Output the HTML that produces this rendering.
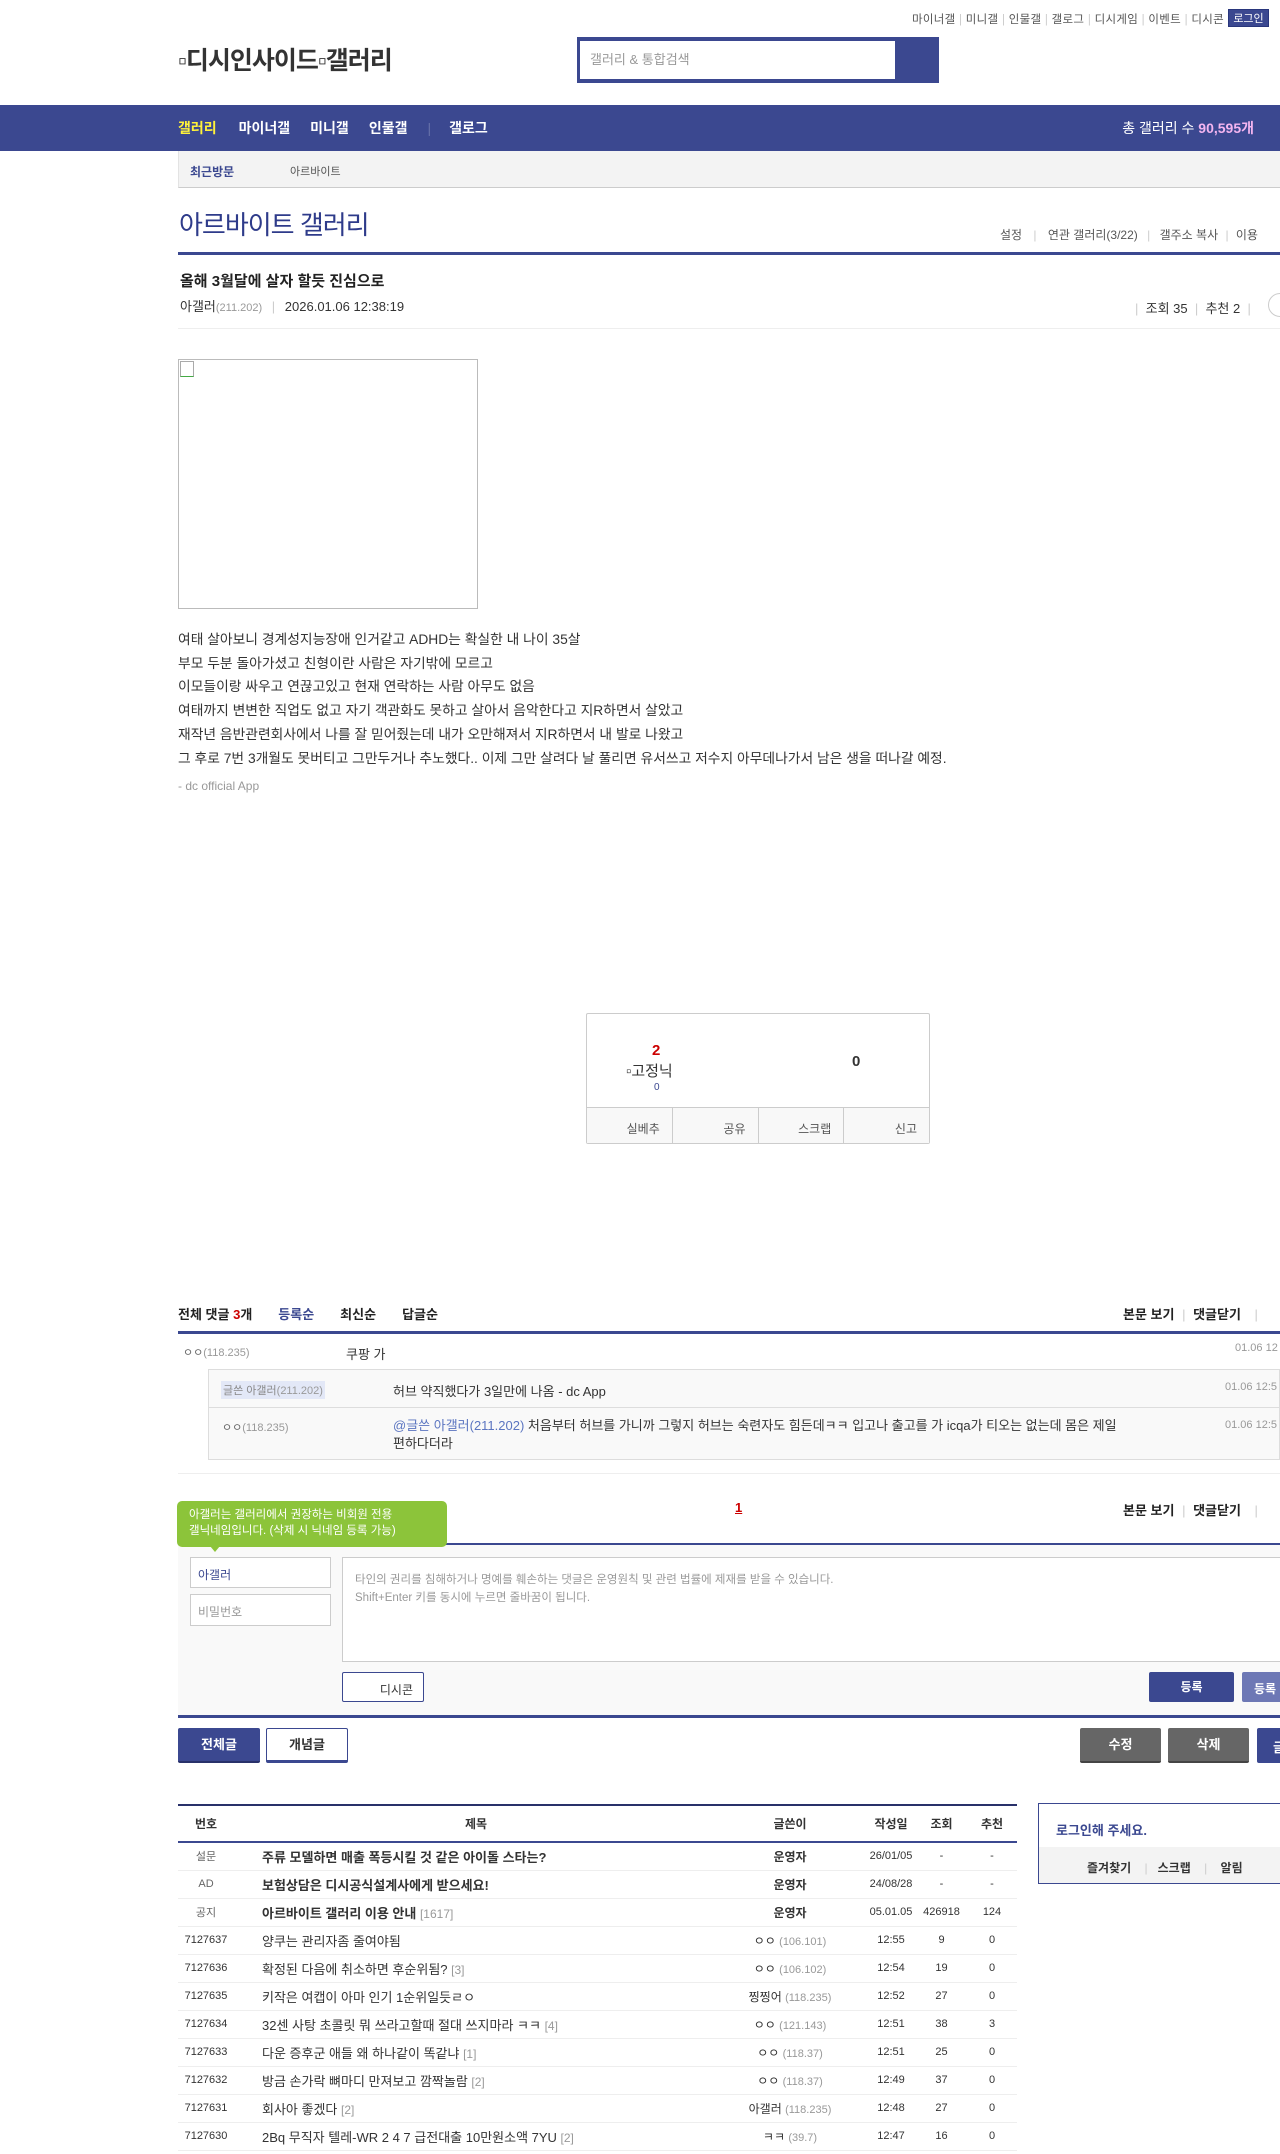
<!DOCTYPE html>
<html><head><meta charset="utf-8"><style>
*{margin:0;padding:0;box-sizing:border-box}
body{width:1280px;height:2154px;overflow:hidden;position:relative;background:#fff;font-family:"Liberation Sans","Noto Sans CJK KR",sans-serif;color:#333;font-size:13px}
.a{position:absolute;white-space:nowrap}
.nv{background:#3b4890}
.tb td{height:28px;border-bottom:1px solid #eee;font-size:12px;text-align:center;color:#333}
.tb td.t{text-align:left;padding-left:0;font-size:13px}
.tb .b{font-weight:bold}
.g{color:#999;font-size:11px}
.cnt{color:#999;font-size:12px}
</style></head><body>
<!-- top links -->
<div class="a" style="right:56px;top:11px;font-size:11.5px;color:#555;letter-spacing:0.3px">마이너갤 <span style="color:#ccc">|</span> 미니갤 <span style="color:#ccc">|</span> 인물갤 <span style="color:#ccc">|</span> 갤로그 <span style="color:#ccc">|</span> 디시게임 <span style="color:#ccc">|</span> 이벤트 <span style="color:#ccc">|</span> 디시콘</div>
<div class="a nv" style="left:1228px;top:9px;width:41px;height:18px;color:#fff;font-size:11px;text-align:center;line-height:18px;border:1px solid #29367c">로그인</div>
<!-- logo -->
<div class="a" style="left:178px;top:41px;font-size:25px;font-weight:bold;color:#333;letter-spacing:-1px">▫디시인사이드▫갤러리</div>
<!-- search -->
<div class="a nv" style="left:577px;top:37px;width:362px;height:46px"></div>
<div class="a" style="left:580px;top:41px;width:315px;height:38px;background:#fff;color:#999;font-size:13px;line-height:38px;padding-left:10px">갤러리 &amp; 통합검색</div>
<!-- nav -->
<div class="a nv" style="left:0;top:105px;width:1280px;height:46px"></div>
<div class="a" style="left:178px;top:119px;font-size:14px;font-weight:bold;color:#fff;line-height:18px"><span style="color:#fff23a">갤러리</span><span style="margin-left:22px">마이너갤</span><span style="margin-left:20px">미니갤</span><span style="margin-left:20px">인물갤</span><span style="margin-left:20px;color:#6670a8;font-weight:normal">|</span><span style="margin-left:18px">갤로그</span></div>
<div class="a" style="right:26px;top:119px;font-size:14px;color:#fff;line-height:18px">총 갤러리 수 <b style="color:#f4b5f0">90,595개</b></div>
<!-- recent -->
<div class="a" style="left:178px;top:151px;width:1102px;height:37px;background:#f3f3f3;border-bottom:1px solid #ccc;border-left:1px solid #e3e3e3"></div>
<div class="a" style="left:190px;top:163px;font-size:12px;font-weight:bold;color:#3b4890">최근방문</div>
<div class="a" style="left:290px;top:163px;font-size:11px;color:#555">아르바이트</div>
<!-- title -->
<div class="a" style="left:179px;top:205px;font-size:26px;color:#2e3b8a;letter-spacing:-1px">아르바이트 갤러리</div>
<div class="a" style="left:1000px;top:226px;font-size:12px;color:#555">설정 <span style="color:#ccc;margin:0 8px">|</span> 연관 갤러리(3/22) <span style="color:#ccc;margin:0 6px">|</span> 갤주소 복사 <span style="color:#ccc;margin:0 4px">|</span> 이용</div>
<div class="a nv" style="left:178px;top:252px;width:1102px;height:3px"></div>
<div class="a" style="left:180px;top:270px;font-size:15px;font-weight:bold;color:#222">올해 3월달에 살자 할듯 진심으로</div>
<div class="a" style="left:180px;top:296px;font-size:13px;color:#333">아갤러<span class="g">(211.202)</span> <span style="color:#ccc;margin:0 6px">|</span> 2026.01.06 12:38:19</div>
<div class="a" style="left:1135px;top:298px;font-size:13px;color:#333"><span style="color:#ccc">|</span>&nbsp; 조회 35 &nbsp;<span style="color:#ccc">|</span>&nbsp; 추천 2 &nbsp;<span style="color:#ccc">|</span></div>
<div class="a" style="left:1268px;top:293px;width:24px;height:24px;border:1px solid #ccc;border-radius:50%"></div>
<div class="a" style="left:178px;top:328px;width:1102px;height:1px;background:#eee"></div>
<!-- image -->
<div class="a" style="left:178px;top:359px;width:300px;height:250px;border:1px solid #bbb"></div>
<div class="a" style="left:180px;top:361px;width:14px;height:16px;border:1px solid #aaa;border-bottom-color:#4a4"></div>
<!-- body -->
<div class="a" style="left:178px;top:628px;font-size:13.8px;color:#333;line-height:23.7px">여태 살아보니 경계성지능장애 인거같고 ADHD는 확실한 내 나이 35살<br>부모 두분 돌아가셨고 친형이란 사람은 자기밖에 모르고<br>이모들이랑 싸우고 연끊고있고 현재 연락하는 사람 아무도 없음<br>여태까지 변변한 직업도 없고 자기 객관화도 못하고 살아서 음악한다고 지R하면서 살았고<br>재작년 음반관련회사에서 나를 잘 믿어줬는데 내가 오만해져서 지R하면서 내 발로 나왔고<br>그 후로 7번 3개월도 못버티고 그만두거나 추노했다.. 이제 그만 살려다 날 풀리면 유서쓰고 저수지 아무데나가서 남은 생을 떠나갈 예정.</div>
<div class="a" style="left:178px;top:779px;font-size:12px;color:#999">- dc official App</div>
<!-- recommend -->
<div class="a" style="left:586px;top:1013px;width:344px;height:131px;border:1px solid #ccc;border-radius:2px"></div>
<div class="a" style="left:652px;top:1042px;font-size:15px;font-weight:bold;color:#c00">2</div>
<div class="a" style="left:626px;top:1060px;font-size:15px;color:#333">▫고정닉</div>
<div class="a" style="left:654px;top:1082px;font-size:10px;color:#3b4890">0</div>
<div class="a" style="left:852px;top:1053px;font-size:15px;font-weight:bold;color:#333">0</div>
<div class="a" style="left:587px;top:1107px;width:342px;height:36px;background:#f8f8f8;border-top:1px solid #ccc;display:flex;font-size:12px;color:#555">
<div style="flex:1;border-right:1px solid #ccc;text-align:right;padding:12px 12px 0 0">실베추</div><div style="flex:1;border-right:1px solid #ccc;text-align:right;padding:12px 12px 0 0">공유</div><div style="flex:1;border-right:1px solid #ccc;text-align:right;padding:12px 12px 0 0">스크랩</div><div style="flex:1;text-align:right;padding:12px 12px 0 0">신고</div></div>
<!-- comments -->
<div class="a" style="left:178px;top:1304px;font-size:13px;font-weight:bold;color:#222">전체 댓글 <span style="color:#c00">3</span>개<span style="color:#3b4890;margin-left:26px">등록순</span><span style="margin-left:26px">최신순</span><span style="margin-left:26px">답글순</span></div>
<div class="a" style="left:1123px;top:1304px;font-size:13px;font-weight:bold;color:#222">본문 보기 <span style="color:#ccc;font-weight:normal;margin:0 4px">|</span> 댓글닫기 <span style="color:#ccc;font-weight:normal;margin-left:10px">|</span></div>
<div class="a nv" style="left:178px;top:1331px;width:1102px;height:3px"></div>
<div class="a" style="left:183px;top:1344px;font-size:11px;color:#666">ㅇㅇ<span class="g">(118.235)</span></div>
<div class="a" style="left:346px;top:1344px;font-size:13px;color:#333">쿠팡 가</div>
<div class="a" style="left:1235px;top:1342px;font-size:11px;color:#999">01.06 12</div>
<div class="a" style="left:208px;top:1369px;width:1072px;height:91px;background:#f9f9f9;border:1px solid #ddd"></div>
<div class="a" style="left:208px;top:1407px;width:1072px;height:1px;background:#ddd"></div>
<div class="a" style="left:221px;top:1381px;font-size:11px;color:#888;background:#e3e8f7;padding:1px 2px">글쓴 아갤러<span class="g">(211.202)</span></div>
<div class="a" style="left:393px;top:1381px;font-size:13px;color:#333">허브 약직했다가 3일만에 나옴 - dc App</div>
<div class="a" style="left:1225px;top:1381px;font-size:11px;color:#999">01.06 12:5</div>
<div class="a" style="left:222px;top:1419px;font-size:11px;color:#666">ㅇㅇ<span class="g">(118.235)</span></div>
<div class="a" style="left:393px;top:1417px;font-size:13px;color:#333;line-height:18px;white-space:normal;width:780px"><span style="color:#5b75c0">@글쓴 아갤러(211.202)</span> 처음부터 허브를 가니까 그렇지 허브는 숙련자도 힘든데ㅋㅋ 입고나 출고를 가 icqa가 티오는 없는데 몸은 제일<br>편하다더라</div>
<div class="a" style="left:1225px;top:1419px;font-size:11px;color:#999">01.06 12:5</div>
<div class="a" style="left:178px;top:1473px;width:1102px;height:1px;background:#eee"></div>
<div class="a" style="left:735px;top:1500px;font-size:13px;font-weight:bold;color:#c00;text-decoration:underline">1</div>
<div class="a" style="left:1123px;top:1500px;font-size:13px;font-weight:bold;color:#222">본문 보기 <span style="color:#ccc;font-weight:normal;margin:0 4px">|</span> 댓글닫기 <span style="color:#ccc;font-weight:normal;margin-left:10px">|</span></div>
<!-- write -->
<div class="a" style="left:178px;top:1543px;width:1102px;height:172px;background:#f9f9f9;border-top:2px solid #3b4890"></div>
<div class="a" style="left:177px;top:1501px;width:270px;height:46px;background:#8cc43a;border-radius:5px;color:#fff;font-size:11.5px;line-height:16px;padding:6px 0 0 12px;white-space:normal">아갤러는 갤러리에서 권장하는 비회원 전용<br>갤닉네임입니다. (삭제 시 닉네임 등록 가능)</div>
<div class="a" style="left:210px;top:1546px;width:0;height:0;border-left:5px solid transparent;border-right:5px solid transparent;border-top:6px solid #8cc43a"></div>
<div class="a" style="left:190px;top:1557px;width:141px;height:31px;background:#fff;border:1px solid #ccc;font-size:12px;color:#3b4890;padding:8px 7px">아갤러</div>
<div class="a" style="left:190px;top:1594px;width:141px;height:32px;background:#fff;border:1px solid #ccc;font-size:12px;color:#999;padding:8px 7px">비밀번호</div>
<div class="a" style="left:342px;top:1557px;width:950px;height:105px;background:#fff;border:1px solid #ccc;font-size:11.5px;color:#999;padding:13px 12px;line-height:18px">타인의 권리를 침해하거나 명예를 훼손하는 댓글은 운영원칙 및 관련 법률에 제재를 받을 수 있습니다.<br>Shift+Enter 키를 동시에 누르면 줄바꿈이 됩니다.</div>
<div class="a" style="left:342px;top:1672px;width:82px;height:30px;background:#fff;border:1px solid #3b4890;border-radius:2px;font-size:12px;color:#333;text-align:right;padding:8px 10px 0 0">디시콘</div>
<div class="a nv" style="left:1149px;top:1672px;width:85px;height:30px;border-radius:2px;color:#fff;font-size:12px;font-weight:bold;text-align:center;line-height:30px">등록</div>
<div class="a" style="left:1242px;top:1672px;width:60px;height:30px;background:#6d78b5;border-radius:2px;color:#fff;font-size:12px;font-weight:bold;padding:8px 0 0 12px">등록</div>
<div class="a nv" style="left:178px;top:1715px;width:1102px;height:3px"></div>
<!-- buttons -->
<div class="a nv" style="left:178px;top:1728px;width:82px;height:35px;border-bottom:2px solid #29316a;border-radius:2px;color:#fff;font-size:13px;font-weight:bold;text-align:center;line-height:33px">전체글</div>
<div class="a" style="left:266px;top:1728px;width:82px;height:35px;border:1px solid #3b4890;border-bottom:3px solid #3b4890;border-radius:2px;color:#333;font-size:13px;font-weight:bold;text-align:center;line-height:31px">개념글</div>
<div class="a" style="left:1080px;top:1728px;width:81px;height:35px;background:#666;border-bottom:2px solid #444;border-radius:2px;color:#fff;font-size:13px;font-weight:bold;text-align:center;line-height:33px">수정</div>
<div class="a" style="left:1168px;top:1728px;width:81px;height:35px;background:#666;border-bottom:2px solid #444;border-radius:2px;color:#fff;font-size:13px;font-weight:bold;text-align:center;line-height:33px">삭제</div>
<div class="a nv" style="left:1257px;top:1728px;width:40px;height:35px;border-radius:2px;color:#fff;font-size:13px;font-weight:bold;padding:9px 0 0 16px">글</div>
<!-- list -->
<div class="a" style="left:178px;top:1804px;width:839px">
<table class="tb" style="width:839px;border-collapse:collapse;border-top:2px solid #29316a;table-layout:fixed">
<colgroup><col style="width:84px"><col style="width:468px"><col style="width:136px"><col style="width:50px"><col style="width:51px"><col style="width:50px"></colgroup>
<tr><td style="height:37px;border-bottom:2px solid #3b4890;font-weight:bold;font-size:12px;padding-right:28px">번호</td><td style="border-bottom:2px solid #3b4890;font-weight:bold;font-size:12px;text-align:center;padding-right:40px">제목</td><td style="border-bottom:2px solid #3b4890;font-weight:bold;font-size:12px;padding-right:16px">글쓴이</td><td style="border-bottom:2px solid #3b4890;font-weight:bold;font-size:12px">작성일</td><td style="border-bottom:2px solid #3b4890;font-weight:bold;font-size:12px">조회</td><td style="border-bottom:2px solid #3b4890;font-weight:bold;font-size:12px">추천</td></tr>
<tr><td style="font-size:11px;color:#666;padding-right:28px">설문</td><td class="t b">주류 모델하면 매출 폭등시킬 것 같은 아이돌 스타는?</td><td class="b" style="padding-right:16px">운영자</td><td style="font-size:11px">26/01/05</td><td style="font-size:11px">-</td><td style="font-size:11px">-</td></tr>
<tr><td style="font-size:11px;color:#666;padding-right:28px">AD</td><td class="t b">보험상담은 디시공식설계사에게 받으세요!</td><td class="b" style="padding-right:16px">운영자</td><td style="font-size:11px">24/08/28</td><td style="font-size:11px">-</td><td style="font-size:11px">-</td></tr>
<tr><td style="font-size:11px;color:#666;padding-right:28px">공지</td><td class="t b">아르바이트 갤러리 이용 안내 <span class="cnt" style="font-weight:normal">[1617]</span></td><td class="b" style="padding-right:16px">운영자</td><td style="font-size:11px">05.01.05</td><td style="font-size:11px">426918</td><td style="font-size:11px">124</td></tr>
<tr><td style="font-size:11px;padding-right:28px">7127637</td><td class="t">양쿠는 관리자좀 줄여야됨</td><td style="padding-right:16px">ㅇㅇ <span class="g">(106.101)</span></td><td style="font-size:11px">12:55</td><td style="font-size:11px">9</td><td style="font-size:11px">0</td></tr>
<tr><td style="font-size:11px;padding-right:28px">7127636</td><td class="t">확정된 다음에 취소하면 후순위됨? <span class="cnt">[3]</span></td><td style="padding-right:16px">ㅇㅇ <span class="g">(106.102)</span></td><td style="font-size:11px">12:54</td><td style="font-size:11px">19</td><td style="font-size:11px">0</td></tr>
<tr><td style="font-size:11px;padding-right:28px">7127635</td><td class="t">키작은 여캡이 아마 인기 1순위일듯ㄹㅇ</td><td style="padding-right:16px">찡찡어 <span class="g">(118.235)</span></td><td style="font-size:11px">12:52</td><td style="font-size:11px">27</td><td style="font-size:11px">0</td></tr>
<tr><td style="font-size:11px;padding-right:28px">7127634</td><td class="t">32센 사탕 초콜릿 뭐 쓰라고할때 절대 쓰지마라 ㅋㅋ <span class="cnt">[4]</span></td><td style="padding-right:16px">ㅇㅇ <span class="g">(121.143)</span></td><td style="font-size:11px">12:51</td><td style="font-size:11px">38</td><td style="font-size:11px">3</td></tr>
<tr><td style="font-size:11px;padding-right:28px">7127633</td><td class="t">다운 증후군 애들 왜 하나같이 똑같냐 <span class="cnt">[1]</span></td><td style="padding-right:16px">ㅇㅇ <span class="g">(118.37)</span></td><td style="font-size:11px">12:51</td><td style="font-size:11px">25</td><td style="font-size:11px">0</td></tr>
<tr><td style="font-size:11px;padding-right:28px">7127632</td><td class="t">방금 손가락 뼈마디 만져보고 깜짝놀람 <span class="cnt">[2]</span></td><td style="padding-right:16px">ㅇㅇ <span class="g">(118.37)</span></td><td style="font-size:11px">12:49</td><td style="font-size:11px">37</td><td style="font-size:11px">0</td></tr>
<tr><td style="font-size:11px;padding-right:28px">7127631</td><td class="t">회사아 좋겠다 <span class="cnt">[2]</span></td><td style="padding-right:16px">아갤러 <span class="g">(118.235)</span></td><td style="font-size:11px">12:48</td><td style="font-size:11px">27</td><td style="font-size:11px">0</td></tr>
<tr><td style="font-size:11px;padding-right:28px">7127630</td><td class="t">2Bq 무직자 텔레-WR 2 4 7 급전대출 10만원소액 7YU <span class="cnt">[2]</span></td><td style="padding-right:16px">ㅋㅋ <span class="g">(39.7)</span></td><td style="font-size:11px">12:47</td><td style="font-size:11px">16</td><td style="font-size:11px">0</td></tr>
</table></div>
<!-- login box -->
<div class="a" style="left:1038px;top:1803px;width:260px;height:81px;border:1px solid #3b4890"></div>
<div class="a" style="left:1056px;top:1820px;font-size:13px;font-weight:bold;color:#3b4890">로그인해 주세요.</div>
<div class="a" style="left:1039px;top:1847px;width:260px;height:36px;background:#f3f3f3"></div>
<div class="a" style="left:1087px;top:1859px;font-size:12px;font-weight:bold;color:#333">즐겨찾기 <span style="color:#ccc;font-weight:normal;margin:0 10px">|</span>스크랩 <span style="color:#ccc;font-weight:normal;margin:0 10px">|</span> 알림</div>
</body></html>
